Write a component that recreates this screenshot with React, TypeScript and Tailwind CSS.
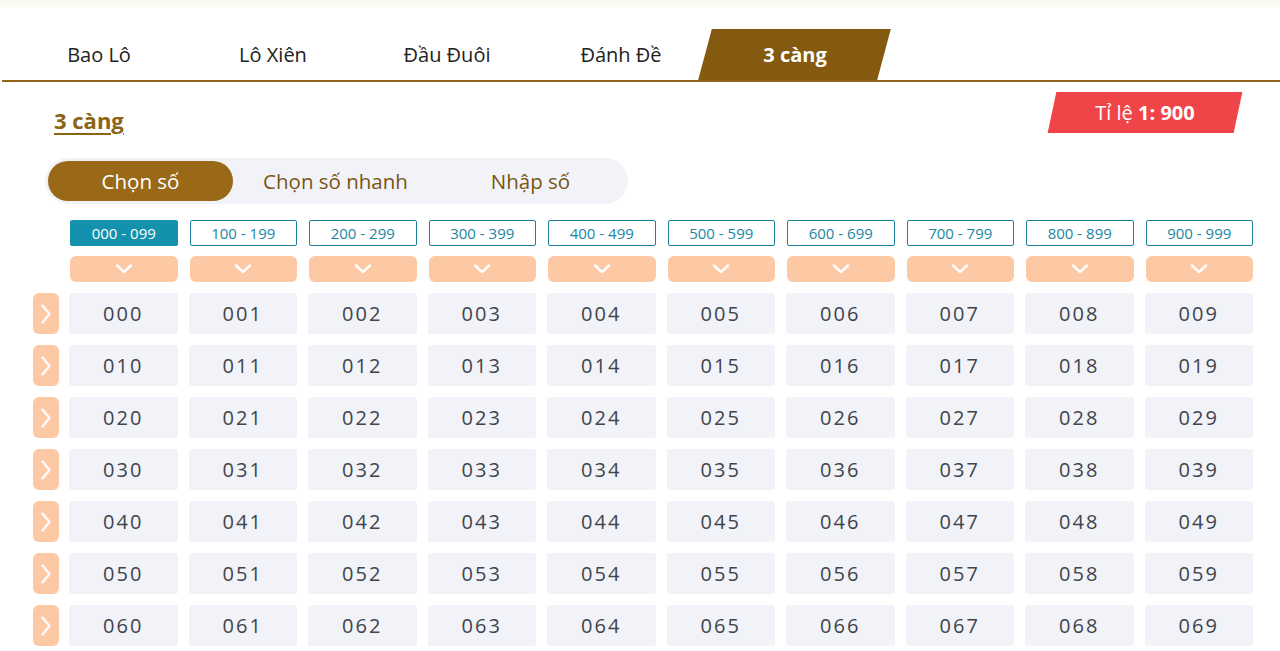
import { useState } from "react";

const TABS = ["Bao Lô", "Lô Xiên", "Đầu Đuôi", "Đánh Đề", "3 càng"];
const MODES = ["Chọn số", "Chọn số nhanh", "Nhập số"];
const RANGES = Array.from({ length: 10 }, (_, i) => {
  const a = String(i * 100).padStart(3, "0");
  const b = String(i * 100 + 99).padStart(3, "0");
  return `${a} - ${b}`;
});

function ChevronDown() {
  return (
    <svg width="18" height="10" viewBox="0 0 18 10" fill="none">
      <path d="M2 1.5 L9 8 L16 1.5" stroke="white" strokeWidth="2.4" strokeLinecap="round" strokeLinejoin="round" />
    </svg>
  );
}

function ChevronRight() {
  return (
    <svg width="12" height="22" viewBox="0 0 12 22" fill="none">
      <path d="M2.5 2.5 L9.5 11 L2.5 19.5" stroke="white" strokeWidth="2.2" strokeLinecap="round" strokeLinejoin="round" />
    </svg>
  );
}

export default function App() {
  const [tab, setTab] = useState(4);
  const [mode, setMode] = useState(0);
  const [range, setRange] = useState(0);
  const [picked, setPicked] = useState<string[]>([]);

  const start = range * 100;
  const rows = Array.from({ length: 7 }, (_, r) =>
    Array.from({ length: 10 }, (_, c) => String(start + r * 10 + c).padStart(3, "0"))
  );

  const toggle = (n: string) =>
    setPicked(picked.includes(n) ? picked.filter((p) => p !== n) : [...picked, n]);

  return (
    <div className="h-[651px] w-[1280px] overflow-hidden bg-white font-['Open_Sans',sans-serif]">
      <div className="h-[7px] bg-[#fbfaf3]" />

      {/* Tabs */}
      <div className="ml-[2px] mt-[22px] flex h-[53px] border-b-2 border-[#94661b] pl-[10px]">
        {TABS.map((t, i) => (
          <button
            key={t}
            onClick={() => setTab(i)}
            className="relative flex w-[174px] items-center justify-center pt-[1px] text-[20px]"
          >
            {tab === i && (
              <span className="absolute inset-y-0 left-[-3px] right-[-2px] -skew-x-[15deg] bg-[#845a10]" />
            )}
            <span className={`relative ${tab === i ? "font-bold text-white" : "text-[#222]"}`}>{t}</span>
          </button>
        ))}
      </div>

      {/* Heading + odds */}
      <div className="flex items-start justify-between pl-[54px] pr-[42px] pt-[10px]">
        <h2 className="mt-[14px] text-[22px] font-bold leading-[28px] text-[#8b6415] underline decoration-2 underline-offset-[4px]">
          3 càng
        </h2>
        <div className="relative flex h-[41px] w-[186px] items-center justify-center">
          <span className="absolute inset-0 -skew-x-[12deg] bg-[#ef4548]" />
          <span className="relative text-[20px] text-white">
            Tỉ lệ <b>1: 900</b>
          </span>
        </div>
      </div>

      {/* Mode switch */}
      <div className="ml-[45px] mt-[24px] flex h-[46px] w-[583px] items-center gap-[10px] rounded-full bg-[#f1f3f8] pl-[3px]">
        {MODES.map((m, i) => (
          <button
            key={m}
            onClick={() => setMode(i)}
            className={`h-[40px] w-[185px] rounded-full text-[20.5px] ${
              mode === i ? "bg-[#9a6917] text-white" : "text-[#7b5413]"
            }`}
          >
            {m}
          </button>
        ))}
      </div>

      {/* Number board */}
      <div className="ml-[33px] mt-[16px] flex w-[1220px] flex-col gap-[10px]">
        <div className="flex gap-[10px]">
          <div className="w-[26px] shrink-0" />
          <div className="grid flex-1 grid-cols-10 gap-x-[11px]">
            {RANGES.map((r, i) => (
              <button
                key={r}
                onClick={() => setRange(i)}
                className={`ml-[1px] h-[26px] rounded-[2px] border text-[15px] leading-none ${
                  range === i
                    ? "border-[#1391ad] bg-[#1391ad] text-white"
                    : "border-[#1b7f99] bg-white text-[#1a86a2]"
                }`}
              >
                {r}
              </button>
            ))}
          </div>
        </div>

        <div className="flex gap-[10px]">
          <div className="w-[26px] shrink-0" />
          <div className="grid flex-1 grid-cols-10 gap-x-[11px]">
            {RANGES.map((r) => (
              <button
                key={r}
                className="ml-[1px] flex h-[26px] items-center justify-center rounded-[6px] bg-[#fdc9a4]"
              >
                <ChevronDown />
              </button>
            ))}
          </div>
        </div>

        <div className="mt-[1px] flex flex-col gap-[11px]">
          {rows.map((row, r) => (
            <div key={r} className="flex gap-[10px]">
              <button className="flex h-[41px] w-[26px] shrink-0 items-center justify-center rounded-[6px] bg-[#fdc9a4]">
                <ChevronRight />
              </button>
              <div className="grid flex-1 grid-cols-10 gap-x-[11px]">
                {row.map((n) => (
                  <button
                    key={n}
                    onClick={() => toggle(n)}
                    className={`h-[41px] rounded-[3px] text-[20px] tracking-[2px] ${
                      picked.includes(n) ? "bg-[#9a6917] text-white" : "bg-[#f1f3f8] text-[#40444c]"
                    }`}
                  >
                    {n}
                  </button>
                ))}
              </div>
            </div>
          ))}
        </div>
      </div>
    </div>
  );
}
